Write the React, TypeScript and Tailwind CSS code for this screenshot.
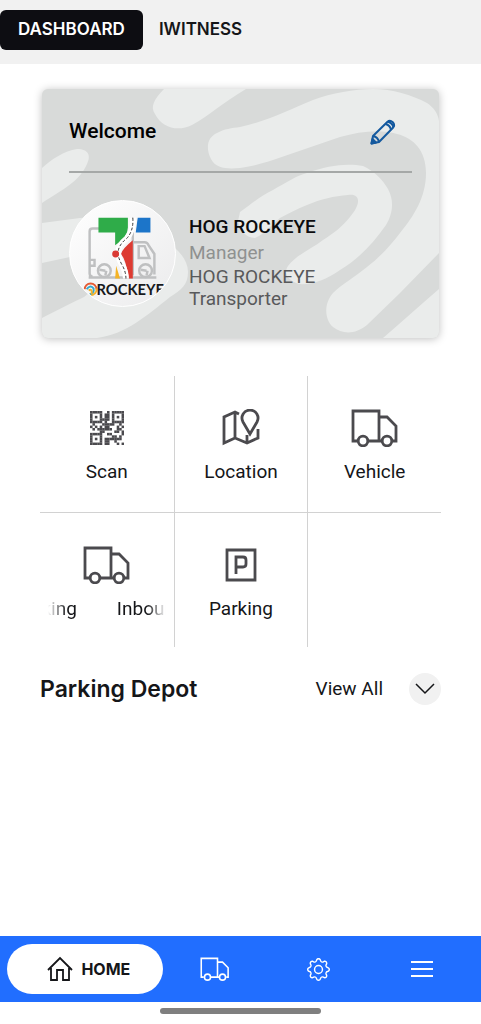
import type { ReactNode } from "react";
import { BsGear } from "react-icons/bs";

function CardArtwork() {
  return (
    <svg
      viewBox="0 0 397 249"
      preserveAspectRatio="none"
      className="absolute inset-0 h-full w-full"
      fill="#eaeceb"
      aria-hidden="true"
    >
      <path d="M122 0C112 10 108 18 113 25C120 39 136 43 150 36C168 26 180 14 204 0Z" />
      <path d="M198 38C225 32 245 22 271 11C290 4 312 0 331 0C350 0 370 6 385 14C391 18 396 24 397 32V164L358 204L325 236C313 246 300 245 291 238C282 230 282 214 291 204C300 195 313 188 325 178C338 168 348 157 358 144C372 127 384 108 384 84C384 62 372 49 355 45C340 40 318 42 298 48L231 71C218 75 212 77 198 79C186 80 174 80 169 70C163 58 166 48 175 44C182 40 190 39 198 38Z" />
      <path d="M198 123C212 113 220 106 231 101C245 93 254 87 265 84C286 76 306 74 321 77C332 82 341 91 346 100C353 113 350 126 344 136C330 156 315 171 298 181C284 191 270 196 257 195C246 191 241 185 246 177C255 165 270 160 281 151C292 144 300 138 308 128C320 114 318 104 306 106C292 107 279 110 265 116C255 120 247 124 238 129C228 137 223 145 213 149C203 149 198 140 196 132Z" />
      <path d="M0 79C10 70 22 62 35 60C47 60 49 67 45 75C38 92 20 101 0 114Z" />
      <path d="M0 134L38 129C75 126 146 150 146 183C146 196 139 201 128 208C105 226 85 245 55 249H0V229C15 221 34 212 42 208L90 170L28 168L0 174Z" />
      <path d="M397 200V249H341C360 233 378 216 397 200Z" />
    </svg>
  );
}

function PencilIcon() {
  return (
    <svg viewBox="0 0 26 26" className="h-[26px] w-[26px]" fill="none" stroke="#14599f" strokeWidth="2" strokeLinejoin="round" aria-hidden="true">
      <path d="M1.500 24.500L3 17L17.500 2.800Q20 .8 22.800 3.200Q25.200 6 23.200 8.500L9 23Z" />
      <path d="M3 17Q8 18 9 23M15.500 5Q20 6 21 10.800M18 2.800Q22.500 4 23.300 8" />
      <path d="M1.500 24.500L6 23.500L2.500 20Z" fill="#14599f" />
    </svg>
  );
}

function RockeyeLogo() {
  return (
    <svg viewBox="0 0 107 107" className="h-full w-full" role="img" aria-label="Rockeye">
      <g fill="none" stroke="#bfc0c1" strokeWidth="2.5">
        <path d="M32 28H23Q20 28 20 31V74Q20 77 23 77M20 60H25V66H20M19 78H88" />
        <path d="M64 29V76M65 42H76Q79 42 80 45L86 54V75" />
        <path d="M70 46H76L81 58H70Z" />
        <circle cx="35" cy="71" r="6.500" />
        <circle cx="77" cy="71" r="6.500" />
        <path d="M36 71L30 70M37 71L36 76M78 71L72 70M79 71L78 76" />
      </g>
      <path d="M29 17H59V27Q59 37 46 45V32H29Z" fill="#2fac49" />
      <path d="M69 17H82V32H67Z" fill="#1c75c9" />
      <path d="M64 40V79H60Q57 60 52 54Q53 49 64 40Z" fill="#dd3b32" />
      <path d="M47 66L51 79H46Z" fill="#f5b324" />
      <path d="M64 17Q65 30 58 38Q49 45 49 53Q49 58 53 65Q57 72 57 79" fill="none" stroke="#fff" strokeWidth="6" />
      <path d="M64 17Q65 30 58 38Q49 45 49 53Q49 58 53 65Q57 72 57 79" fill="none" stroke="#333" strokeWidth="1" strokeDasharray="3 2" />
      <circle cx="46.500" cy="54" r="3.500" fill="#d93a35" />
      <g fill="none" strokeWidth="2">
        <path d="M15 90A6 6 0 0 1 27 90" stroke="#e55b35" />
        <path d="M27 89A6 6 0 0 1 21 96" stroke="#f3b229" />
        <path d="M17 90Q20 85 24 89Q25 94 20 95" stroke="#35a7cc" />
        <path d="M19 91Q23 89 22 95" stroke="#f3b229" />
      </g>
      <text x="27" y="96" fill="#17191c" className="font-['Lato'] text-[15px] font-bold">
        ROCKEYE
      </text>
    </svg>
  );
}

const QR_ROWS = [
  "11111001011111",
  "10001011010001",
  "10101011010101",
  "10001111010001",
  "11111010011111",
  "01000111110010",
  "10101011000101",
  "01011111100110",
  "00001100001101",
  "11111001100001",
  "10001000011010",
  "10101011111110",
  "10001011001000",
  "11111011000101",
];

function QrIcon() {
  return (
    <svg viewBox="0 0 14 14" className="h-[34px] w-[34px]" fill="#4b4a4e" aria-hidden="true">
      {QR_ROWS.map((row, y) =>
        row
          .split("")
          .map((cell, x) => cell === "1" && <rect key={`${x}-${y}`} x={x} y={y} width="1.05" height="1.05" />)
      )}
    </svg>
  );
}

function MapIcon() {
  return (
    <svg viewBox="0 0 38 38" className="h-[38px] w-[38px]" fill="none" stroke="#4b4a4e" strokeWidth="2.800" aria-hidden="true">
      <path d="M17 5L13 3L2 8V34L13 29L25 34L36 29V20M13 3V29M25 34V26" />
      <path d="M28 25L21 13A8 8 0 1 1 35 13Z" />
    </svg>
  );
}

function TruckIcon({ className, strokeWidth }: { className: string; strokeWidth: number }) {
  return (
    <svg viewBox="0 0 48 38" className={className} fill="none" stroke="currentColor" strokeWidth={strokeWidth} aria-hidden="true">
      <path d="M6 32H2V2H28V32H17M28 8H36L45 17V32H42M31 32H28" />
      <circle cx="12" cy="32" r="4.800" />
      <circle cx="36" cy="32" r="4.800" />
    </svg>
  );
}

function ParkingIcon() {
  return (
    <svg viewBox="0 0 32 34" className="h-[34px] w-8" fill="none" stroke="#4b4a4e" strokeWidth="2.800" aria-hidden="true">
      <path d="M2 2H30V32H2Z" />
      <path d="M11 26V9H18Q21 9 21 12V16Q21 19 18 19H11" />
    </svg>
  );
}

function HomeIcon() {
  return (
    <svg viewBox="0 0 26 26" className="h-[26px] w-[26px]" fill="none" stroke="currentColor" strokeWidth="1.800" aria-hidden="true">
      <path d="M1 14L13 2L25 14M4 12V24H10V14H16V24H22V12" />
    </svg>
  );
}

interface TileProps {
  icon: ReactNode;
  children: ReactNode;
}

function Tile({ icon, children }: TileProps) {
  return (
    <button type="button" className="flex w-full flex-col items-center pt-8 text-[19px] leading-6">
      <span className="flex h-10 items-center justify-center text-[#4b4a4e]">{icon}</span>
      <span className="mt-3">{children}</span>
    </button>
  );
}

export default function App() {
  return (
    <div className="flex min-h-screen flex-col bg-white font-['Roboto',sans-serif] text-[#151619]">
      <header className="flex h-16 items-start bg-[#f1f1f1] pt-[10px] font-['Inter',sans-serif] text-[17px] font-semibold">
        <button type="button" className="h-10 rounded-md bg-[#0d0d12] px-[18px] text-white">
          DASHBOARD
        </button>
        <button type="button" className="h-10 px-4">
          IWITNESS
        </button>
      </header>

      <main className="flex-1 px-10 pt-[25px]">
        <section className="relative mx-[2px] h-[249px] overflow-hidden rounded-md bg-[#d8dad9] shadow-[0_1px_8px_#00000040]">
          <CardArtwork />
          <div className="relative px-[27px]">
            <div className="flex h-[84px] items-center justify-between border-b-2 border-[#a5a8a7] pt-1 pr-4">
              <h1 className="text-[21px] font-medium text-black">Welcome</h1>
              <button type="button" aria-label="Edit profile">
                <PencilIcon />
              </button>
            </div>
            <div className="flex gap-[13px] pt-[27px]">
              <div className="h-[107px] w-[107px] shrink-0 overflow-hidden rounded-full border border-white bg-linear-to-br from-white to-[#ebebec]">
                <RockeyeLogo />
              </div>
              <div className="pt-[14px] text-[19px] leading-[22px] text-[#58595b]">
                <p className="leading-[26px] font-medium text-[#0b0b0d]">HOG ROCKEYE</p>
                <p className="leading-[26px] text-[#8f9190]">Manager</p>
                <p>HOG ROCKEYE</p>
                <p>Transporter</p>
              </div>
            </div>
          </div>
        </section>

        <section className="mt-[38px] grid grid-cols-3 grid-rows-[137px_134px]">
          <div className="flex border-b border-[#d2d2d2]">
            <Tile icon={<QrIcon />}>Scan</Tile>
          </div>
          <div className="flex border-b border-l border-[#d2d2d2]">
            <Tile icon={<MapIcon />}>Location</Tile>
          </div>
          <div className="flex border-b border-l border-[#d2d2d2]">
            <Tile icon={<TruckIcon className="h-[38px] w-12" strokeWidth={2.8} />}>Vehicle</Tile>
          </div>
          <div className="flex">
            <Tile icon={<TruckIcon className="h-[38px] w-12" strokeWidth={2.8} />}>
              <span className="flex w-[118px] gap-10 overflow-hidden mask-[linear-gradient(to_right,transparent,black_16%,black_84%,transparent)]">
                <span className="flex w-[29px] shrink-0 justify-end overflow-hidden">king</span>
                <span>Inbound</span>
              </span>
            </Tile>
          </div>
          <div className="flex border-l border-[#d2d2d2]">
            <Tile icon={<ParkingIcon />}>Parking</Tile>
          </div>
          <div className="border-l border-[#d2d2d2]" />
        </section>

        <section className="mt-[26px] flex h-8 items-center">
          <h2 className="flex-1 font-['Inter',sans-serif] text-[23px] font-semibold">Parking Depot</h2>
          <a href="#depots" className="text-[19px]">
            View All
          </a>
          <button
            type="button"
            aria-label="Expand parking depot"
            className="ml-[26px] flex h-8 w-8 items-center justify-center rounded-full bg-[#f1f1f1]"
          >
            <svg viewBox="0 0 20 12" className="h-3 w-5" fill="none" stroke="currentColor" strokeWidth="1.5" aria-hidden="true">
              <path d="M1 1L10 10L19 1" />
            </svg>
          </button>
        </section>
      </main>

      <nav className="grid h-[66px] grid-cols-[3fr_2fr_2fr_2fr] bg-[#216eff] px-[7px] py-2 text-white">
        <button
          type="button"
          className="flex items-center justify-center gap-2 rounded-full bg-white pl-2 font-['Inter',sans-serif] text-base font-bold text-[#151619]"
        >
          <HomeIcon />
          HOME
        </button>
        <button type="button" aria-label="Vehicles" className="flex items-center justify-center">
          <TruckIcon className="h-6 w-[30px]" strokeWidth={2.5} />
        </button>
        <button type="button" aria-label="Settings" className="flex items-center justify-center">
          <BsGear className="h-[23px] w-[23px]" />
        </button>
        <button type="button" aria-label="Menu" className="flex items-center justify-center">
          <svg viewBox="0 0 22 18" className="h-[18px] w-[22px]" stroke="currentColor" strokeWidth="2" aria-hidden="true">
            <path d="M0 2H22M0 9H22M0 16H22" />
          </svg>
        </button>
      </nav>
      <div className="flex h-[22px] items-center justify-center pb-1">
        <div className="h-[6px] w-1/3 rounded-full bg-[#7f7f7f]" />
      </div>
    </div>
  );
}
